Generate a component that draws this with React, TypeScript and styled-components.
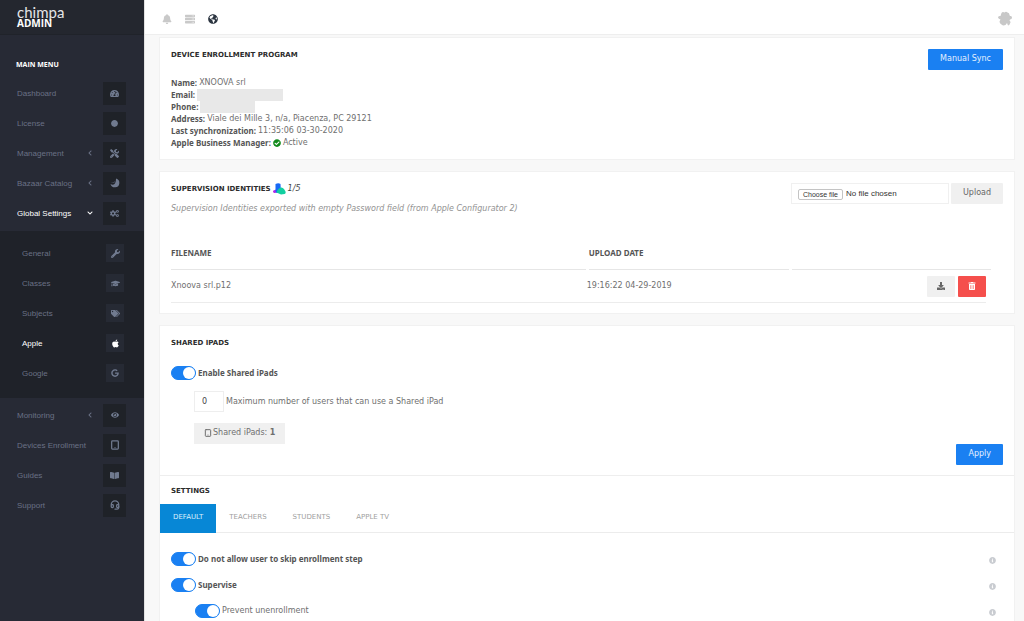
import React from "react";
import styled, { createGlobalStyle, css } from "styled-components";
import {
  FaApple,
  FaBell,
  FaBookOpen,
  FaCheckCircle,
  FaChevronDown,
  FaChevronLeft,
  FaCircle,
  FaCogs,
  FaDownload,
  FaEye,
  FaGlobeAmericas,
  FaGoogle,
  FaGraduationCap,
  FaInfoCircle,
  FaServer,
  FaTachometerAlt,
  FaTags,
  FaTools,
  FaTrashAlt,
  FaWrench,
} from "react-icons/fa";
import { Headset, Tablet } from "lucide-react";

const strongFont = css`
  font-family: "Noto Sans", sans-serif;
  font-weight: 700;
  color: #555;
`;

const GlobalStyle = createGlobalStyle`
  *, *::before, *::after { box-sizing: border-box; }
  body {
    margin: 0;
    background: #f8f8f8;
    color: #6f6f6f;
    font: 8px/12px "DejaVu Sans", sans-serif;
  }
  button, input { font: inherit; color: inherit; margin: 0; }
  ul { list-style: none; margin: 0; padding: 0; }
  h2, p { margin: 0; }
`;

const Shell = styled.div`
  display: grid;
  grid-template-columns: 144px minmax(0, 1fr);
  height: 100vh;
  overflow: hidden;
`;

/* ---------- sidebar ---------- */

const Sidebar = styled.aside`
  background: #272a35;
  font-family: "Liberation Sans", Arial, sans-serif;
  overflow: hidden;
`;

const Brand = styled.a`
  display: block;
  height: 35px;
  padding: 6px 17px 0;
  background: #24272f;
  border-bottom: 1px solid #20232a;
  color: #e4e5e7;
  text-decoration: none;
`;

const BrandTop = styled.span`
  display: block;
  font: 400 15px/13px Lato, sans-serif;
`;

const BrandBottom = styled.span`
  display: block;
  font: 700 10px/8px "Open Sans", sans-serif;
  color: #fff;
`;

const MenuTitle = styled.h2`
  margin: 24px 16px 7px;
  color: #fff;
  font: 700 7px/12px "Open Sans", sans-serif;
`;

const MenuLink = styled.a<{ $active?: boolean }>`
  display: flex;
  align-items: center;
  height: 30px;
  padding: 0 18px 0 17px;
  color: ${(p) => (p.$active ? "#fff" : "#6a7185")};
  text-decoration: none;
`;

const MenuLabel = styled.span`
  flex: 1;
  padding-top: 1px;
  white-space: nowrap;
`;

const Caret = styled.span`
  display: flex;
  margin-right: 10px;
  font-size: 6px;
`;

const IconTile = styled.span<{ $small?: boolean }>`
  display: grid;
  place-items: center;
  width: ${(p) => (p.$small ? 18 : 23)}px;
  height: ${(p) => (p.$small ? 18 : 23)}px;
  background: ${(p) => (p.$small ? "#262a34" : "#1f2228")};
  font-size: 9px;
`;

const SubMenu = styled.ul`
  margin: 3px 0 2px;
  padding: 7px 2px 10px 5px;
  background: #1f2229;
`;

/* ---------- page ---------- */

const Page = styled.div`
  display: flex;
  flex-direction: column;
  min-width: 0;
  min-height: 0;
  border-left: 1px solid #e2e2e2;
`;

const TopBar = styled.header`
  display: flex;
  flex: none;
  align-items: center;
  justify-content: space-between;
  height: 35px;
  padding: 3px 11px 0 17px;
  background: #fff;
  border-bottom: 1px solid #eee;
`;

const TopIcons = styled.nav`
  display: flex;
  gap: 13px;
`;

const TopButton = styled.button<{ $dark?: boolean }>`
  display: grid;
  place-items: center;
  width: 10px;
  height: 12px;
  padding: 0;
  border: 0;
  background: none;
  color: ${(p) => (p.$dark ? "#2b3440" : "#c9c9c9")};
  font-size: 10px;
`;

const Content = styled.main`
  flex: 1;
  min-height: 0;
  overflow-y: auto;
  scrollbar-width: none;
  padding: 2px 9px 12px 14px;
`;

const Card = styled.section`
  margin-bottom: 11px;
  background: #fff;
  border: 1px solid #f1f1f1;
`;

const CardBody = styled.div`
  padding: 11px 11px 10px;
`;

const CardHead = styled.div`
  display: flex;
  justify-content: space-between;
  align-items: flex-start;
`;

const Title = styled.h2`
  color: #2c2c2c;
  font-size: 7px;
  font-style: normal;
  font-weight: 700;
  line-height: 12px;
`;

const TitleRow = styled.div`
  display: flex;
  align-items: center;
  gap: 2px;
  height: 12px;
  color: #444;
  font-style: italic;
`;

const Hint = styled.p`
  margin-top: 8px;
  color: #929292;
  font-style: italic;
`;

const Button = styled.button<{ $kind?: "primary" | "danger"; $square?: boolean }>`
  display: inline-flex;
  align-items: center;
  justify-content: center;
  height: 21px;
  padding: ${(p) => (p.$square ? "0 10px 1px" : "0 12px 1px")};
  border: 0;
  border-radius: 1px;
  background: #f0f0f0;
  color: #666;
  ${(p) => p.$kind === "primary" && css`background: #1a80f2; color: #e4f0ff;`}
  ${(p) => p.$kind === "danger" && css`background: #f54f4c; color: #fff;`}
`;

const Facts = styled.dl`
  margin: 7px 0 0;
`;

const Fact = styled.div`
  display: flex;
  align-items: center;
  gap: 2px;
  height: 12px;
  dt { ${strongFont} }
  dd { display: flex; align-items: center; gap: 2px; margin: 0; }
`;

const Redacted = styled.span<{ $wide?: boolean }>`
  width: ${(p) => (p.$wide ? 86 : 55)}px;
  height: 12px;
  background: #e8e8e8;
`;

const Upload = styled.form`
  display: flex;
  gap: 2px;
`;

const FileField = styled.label`
  display: flex;
  align-items: center;
  gap: 3px;
  width: 158px;
  height: 21px;
  padding: 1px 6px 0;
  border: 1px solid #f0f0f0;
  color: #333;
  font: 8px/12px "Liberation Sans", Arial, sans-serif;
`;

const HiddenFile = styled.input`
  width: 0;
  height: 0;
  opacity: 0;
  position: absolute;
`;

const ChooseFile = styled.span`
  padding: 0 4px;
  border: 1px solid #c4c4c4;
  border-radius: 2px;
  font-size: 7px;
  line-height: 9px;
`;

const Table = styled.table`
  width: calc(100% - 12px);
  margin-top: 24px;
  table-layout: fixed;
  border-collapse: collapse;
  text-align: left;
  th, td { padding: 0; }
  th:nth-child(1) { width: 50.7%; }
  th:nth-child(2) { width: 24.8%; }
  th { padding-right: 1px; ${strongFont} }
  th + th { padding-left: 2px; }
  th:last-child { padding-right: 0; }
  td:last-child { padding-right: 5px; }
`;

const HeadCell = styled.div`
  height: 31px;
  padding-top: 8px;
  border-bottom: 1px solid #e6e6e6;
`;

const BodyCell = styled.div`
  display: flex;
  align-items: center;
  gap: 3px;
  height: 33px;
  border-bottom: 1px solid #ececec;
`;

const Actions = styled(BodyCell)`
  justify-content: flex-end;
`;

const SwitchRow = styled.label<{ $nested?: boolean; $strong?: boolean }>`
  display: flex;
  align-items: center;
  gap: 2px;
  height: 14px;
  padding-left: ${(p) => (p.$nested ? 24 : 0)}px;
  ${(p) => p.$strong && strongFont}
`;

const Switch = styled.input.attrs({ type: "checkbox", role: "switch" })`
  appearance: none;
  display: flex;
  width: 25px;
  height: 14px;
  border: 1px solid #1a80f2;
  border-radius: 7px;
  background: #1a80f2;
  &::after {
    content: "";
    width: 12px;
    height: 12px;
    margin-left: auto;
    border-radius: 50%;
    background: #fff;
  }
  &:not(:checked)::after { margin-left: 0; }
`;

const SharedToggle = styled.div`
  margin-top: 17px;
`;

const SharedOptions = styled.div`
  display: flex;
  flex-direction: column;
  align-items: flex-start;
  gap: 11px;
  margin-top: 11px;
  padding-left: 23px;
`;

const LimitRow = styled.label`
  display: flex;
  align-items: center;
  gap: 2px;
`;

const NumberInput = styled.input`
  width: 30px;
  height: 21px;
  padding: 0 7px;
  border: 1px solid #eee;
  background: #fff;
  color: #444;
`;

const Badge = styled.div`
  display: flex;
  align-items: center;
  gap: 1px;
  height: 21px;
  padding: 0 10px 1px;
  background: #f0f0f0;
`;

const Footer = styled.div`
  display: flex;
  justify-content: flex-end;
`;

const Settings = styled.div`
  border-top: 1px solid #eee;
  padding-top: 9px;
`;

const SettingsTitle = styled(Title)`
  padding: 0 11px;
`;

const Tabs = styled.div`
  display: flex;
  height: 29px;
  margin-top: 7px;
  border-bottom: 1px solid #ececec;
`;

const Tab = styled.button<{ $active?: boolean }>`
  height: 29px;
  padding: 0 13px 3px;
  border: 0;
  background: ${(p) => (p.$active ? "#0787d6" : "none")};
  color: ${(p) => (p.$active ? "#d9effc" : "#a0a0a0")};
  font-size: 7px;
`;

const SettingList = styled.div`
  padding: 13px 18px 0 11px;
`;

const Setting = styled.div`
  display: flex;
  align-items: center;
  justify-content: space-between;
  height: 26px;
`;

const InfoButton = styled.button`
  display: flex;
  padding: 2px 0 0;
  border: 0;
  background: none;
  color: #c9ccd1;
  font-size: 7px;
`;

/* ---------- drawings ---------- */

const BazaarIcon = () => (
  <svg width="10" height="10" viewBox="0 0 20 20" fill="currentColor" aria-hidden="true">
    <path d="M12 1a9 9 0 1 1-11 11c3 2 6 2 8 0s3-6 3-11z" />
    <path d="M1 10h7q2-1 2-4-2 3-9 4z" opacity="0.5" />
  </svg>
);

const IdentityIcon = () => (
  <svg width="13" height="12" viewBox="0 0 26 24" aria-hidden="true">
    <path d="M1 15l5-2 4 5-6 2a3 3 0 0 1-3-5z" fill="#b526e8" />
    <path d="M5 2q6-3 10 0l1 18H8q-4-1-3-5z" fill="#1769f5" />
    <path d="M12 11a7 7 0 0 1 10 1l3 5a4 4 0 0 1-2 5l-7 1-9-4q1-5 5-8z" fill="#12cfa0" />
  </svg>
);

const Avatar = () => (
  <svg width="16" height="16" viewBox="0 0 32 32" fill="#c8c8c8" aria-hidden="true">
    <path d="M9 4Q11 1 15 3q3-3 6 0 4 0 4 5l1 2q4-1 4 3t-4 4l-1 2q4 3 1 6-1 4-4 4l-2-5-3 4q-5 2-8-1-4-2-4-6l2-4q-4-1-5-4 0-4 5-3z" />
  </svg>
);

type Item = { label: string; icon: React.ReactNode; active?: boolean; caret?: "left" | "down" };

const mainItems: Item[] = [
  { label: "Dashboard", icon: <FaTachometerAlt /> },
  { label: "License", icon: <FaCircle size={7} /> },
  { label: "Management", icon: <FaTools />, caret: "left" },
  { label: "Bazaar Catalog", icon: <BazaarIcon />, caret: "left" },
  { label: "Global Settings", icon: <FaCogs />, caret: "down", active: true },
];

const subItems: Item[] = [
  { label: "General", icon: <FaWrench /> },
  { label: "Classes", icon: <FaGraduationCap /> },
  { label: "Subjects", icon: <FaTags /> },
  { label: "Apple", icon: <FaApple />, active: true },
  { label: "Google", icon: <FaGoogle size={8} /> },
];

const lowerItems: Item[] = [
  { label: "Monitoring", icon: <FaEye size={8} />, caret: "left" },
  { label: "Devices Enrollment", icon: <Tablet size={10} strokeWidth={3} /> },
  { label: "Guides", icon: <FaBookOpen /> },
  { label: "Support", icon: <Headset size={10} strokeWidth={3} /> },
];

const IconColor = styled.span<{ $lit?: boolean }>`
  display: flex;
  color: ${(p) => (p.$lit ? "#fff" : "#707a8f")};
`;

const MenuItems = ({ items, small }: { items: Item[]; small?: boolean }) => (
  <>
    {items.map((item) => (
      <li key={item.label}>
        <MenuLink href="#" $active={item.active}>
          <MenuLabel>{item.label}</MenuLabel>
          {item.caret && (
            <Caret>{item.caret === "left" ? <FaChevronLeft /> : <FaChevronDown />}</Caret>
          )}
          <IconTile $small={small}>
            <IconColor $lit={small && item.active}>{item.icon}</IconColor>
          </IconTile>
        </MenuLink>
      </li>
    ))}
  </>
);

const settings = [
  { label: "Do not allow user to skip enrollment step", strong: true },
  { label: "Supervise", strong: true },
  { label: "Prevent unenrollment", nested: true },
];

export default function App() {
  return (
    <Shell>
      <GlobalStyle />
      <Sidebar>
        <Brand href="#">
          <BrandTop>chimpa</BrandTop>
          <BrandBottom>ADMIN</BrandBottom>
        </Brand>
        <MenuTitle>MAIN MENU</MenuTitle>
        <ul><MenuItems items={mainItems} /></ul>
        <SubMenu><MenuItems items={subItems} small /></SubMenu>
        <ul><MenuItems items={lowerItems} /></ul>
      </Sidebar>

      <Page>
        <TopBar>
          <TopIcons>
            <TopButton aria-label="Notifications"><FaBell /></TopButton>
            <TopButton aria-label="Servers"><FaServer /></TopButton>
            <TopButton aria-label="Language" $dark><FaGlobeAmericas /></TopButton>
          </TopIcons>
          <Avatar />
        </TopBar>

        <Content>
          <Card>
            <CardBody>
              <CardHead>
                <Title>DEVICE ENROLLMENT PROGRAM</Title>
                <Button $kind="primary">Manual Sync</Button>
              </CardHead>
              <Facts>
                <Fact><dt>Name:</dt><dd>XNOOVA srl</dd></Fact>
                <Fact><dt>Email:</dt><dd><Redacted $wide /></dd></Fact>
                <Fact><dt>Phone:</dt><dd><Redacted /></dd></Fact>
                <Fact><dt>Address:</dt><dd>Viale dei Mille 3, n/a, Piacenza, PC 29121</dd></Fact>
                <Fact><dt>Last synchronization:</dt><dd>11:35:06 03-30-2020</dd></Fact>
                <Fact>
                  <dt>Apple Business Manager:</dt>
                  <dd><FaCheckCircle color="#108a1c" />Active</dd>
                </Fact>
              </Facts>
            </CardBody>
          </Card>

          <Card>
            <CardBody>
              <CardHead>
                <div>
                  <TitleRow>
                    <Title>SUPERVISION IDENTITIES</Title>
                    <IdentityIcon />
                    <span>1/5</span>
                  </TitleRow>
                  <Hint>Supervision Identities exported with empty Password field (from Apple Configurator 2)</Hint>
                </div>
                <Upload>
                  <FileField>
                    <HiddenFile type="file" />
                    <ChooseFile>Choose file</ChooseFile>
                    No file chosen
                  </FileField>
                  <Button type="button">Upload</Button>
                </Upload>
              </CardHead>
              <Table>
                <thead>
                  <tr>
                    <th><HeadCell>FILENAME</HeadCell></th>
                    <th><HeadCell>UPLOAD DATE</HeadCell></th>
                    <th><HeadCell /></th>
                  </tr>
                </thead>
                <tbody>
                  <tr>
                    <td><BodyCell>Xnoova srl.p12</BodyCell></td>
                    <td><BodyCell>19:16:22 04-29-2019</BodyCell></td>
                    <td>
                      <Actions>
                        <Button $square aria-label="Download"><FaDownload /></Button>
                        <Button $square $kind="danger" aria-label="Delete"><FaTrashAlt /></Button>
                      </Actions>
                    </td>
                  </tr>
                </tbody>
              </Table>
            </CardBody>
          </Card>

          <Card>
            <CardBody>
              <Title>SHARED IPADS</Title>
              <SharedToggle>
                <SwitchRow $strong><Switch defaultChecked />Enable Shared iPads</SwitchRow>
              </SharedToggle>
              <SharedOptions>
                <LimitRow>
                  <NumberInput defaultValue="0" />
                  Maximum number of users that can use a Shared iPad
                </LimitRow>
                <Badge><Tablet size={8} strokeWidth={3} /><span>Shared iPads: <b>1</b></span></Badge>
              </SharedOptions>
              <Footer><Button $kind="primary">Apply</Button></Footer>
            </CardBody>
            <Settings>
              <SettingsTitle>SETTINGS</SettingsTitle>
              <Tabs role="tablist">
                <Tab role="tab" aria-selected $active>DEFAULT</Tab>
                <Tab role="tab">TEACHERS</Tab>
                <Tab role="tab">STUDENTS</Tab>
                <Tab role="tab">APPLE TV</Tab>
              </Tabs>
              <SettingList>
                {settings.map((s) => (
                  <Setting key={s.label}>
                    <SwitchRow $strong={s.strong} $nested={s.nested}>
                      <Switch defaultChecked />{s.label}
                    </SwitchRow>
                    <InfoButton aria-label={"About: " + s.label}><FaInfoCircle /></InfoButton>
                  </Setting>
                ))}
              </SettingList>
            </Settings>
          </Card>
        </Content>
      </Page>
    </Shell>
  );
}
